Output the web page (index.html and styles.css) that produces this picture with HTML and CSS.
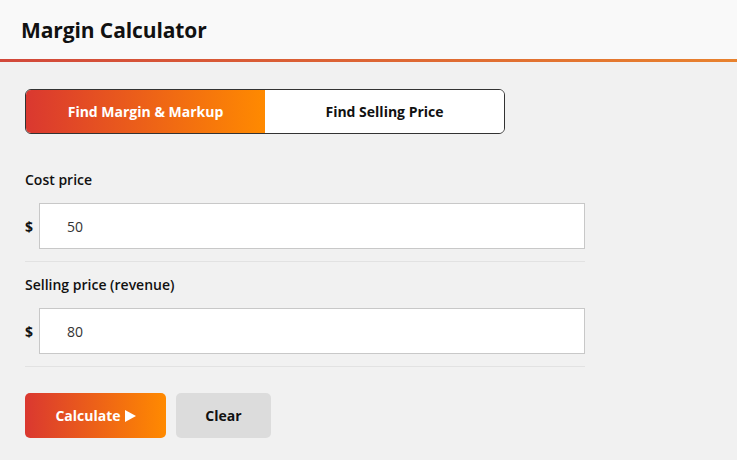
FILE: index.html
```html
<!DOCTYPE html>
<html>

<head>
  <title>Margin Calculator</title>
  <link rel="stylesheet" href="styles.css">
</head>

<body>
  <header class="top-bar">
    <h1>Margin Calculator</h1>
  </header>

  <main class="calc">
    <!-- Mode switch -->
    <div class="mode-toggle">
      <button class="mode active">Find Margin &amp; Markup</button>
      <button class="mode">Find Selling Price</button>
    </div>

    <div class="field">
      <label for="cost">Cost price</label>
      <div class="input-row">
        <span class="currency">$</span>
        <input type="text" id="cost" value="50" />
      </div>
    </div>

    <div class="field">
      <label for="revenue">Selling price (revenue)</label>
      <div class="input-row">
        <span class="currency">$</span>
        <input type="text" id="revenue" value="80" />
      </div>
    </div>

    <div class="actions">
      <button class="btn-calc">Calculate
        <svg width="11" height="12" viewBox="0 0 11 12"><path d="M0 0 L11 6 L0 12 Z" fill="#fff" /></svg>
      </button>
      <button class="btn-clear">Clear</button>
    </div>
  </main>
</body>

</html>
```

FILE: styles.css
```css
body {
  margin: 0;
  background-color: #f1f1f1;
  font-family: "Open Sans", "Noto Sans", sans-serif;
  color: #111;
}

/* Header with gradient underline */
.top-bar {
  height: 62px;
  background-color: #f9f9f9;
  border-bottom: 3px solid;
  border-image: linear-gradient(to right, #d2483a, #e8822e) 1;
  display: flex;
  align-items: center;
  padding-left: 21px;
  box-sizing: border-box;
}

.top-bar h1 {
  margin: 0;
  font-size: 21px;
  font-weight: 700;
  letter-spacing: -0.1px;
}

.calc {
  padding: 27px 25px;
}

/* Toggle between the two calculator modes */
.mode-toggle {
  display: flex;
  width: 480px;
  height: 45px;
  border: 1px solid #333;
  border-radius: 6px;
  overflow: hidden;
  box-sizing: border-box;
  margin-bottom: 36px;
}

.mode {
  flex: 1;
  border: none;
  background: #fff;
  font-family: inherit;
  font-size: 14px;
  font-weight: 700;
  color: #111;
}

.mode.active {
  background: linear-gradient(to right, #da3830, #ff8a00);
  color: #fff;
}

.field {
  width: 560px;
  padding-bottom: 12px;
  border-bottom: 1px solid #e2e2e2;
  margin-bottom: 13px;
}

.field label {
  display: block;
  font-size: 14px;
  font-weight: 600;
  line-height: 20px;
  margin-bottom: 13px;
}

.input-row {
  display: flex;
  align-items: center;
  gap: 6px;
}

.currency {
  width: 8px;
  font-size: 14px;
  font-weight: 700;
}

.input-row input {
  flex: 1;
  height: 46px;
  box-sizing: border-box;
  border: 1px solid #c8c8c8;
  background: #fff;
  padding: 0 27px;
  font-family: inherit;
  font-size: 14px;
  color: #333;
}

.actions {
  display: flex;
  gap: 10px;
  margin-top: 26px;
}

.btn-calc,
.btn-clear {
  height: 45px;
  border: none;
  border-radius: 5px;
  font-family: inherit;
  font-size: 14px;
  font-weight: 700;
}

.btn-calc {
  width: 141px;
  background: linear-gradient(to right, #da3830, #ff8a00);
  color: #fff;
  display: flex;
  align-items: center;
  justify-content: center;
  gap: 4px;
}

.btn-clear {
  width: 95px;
  background: #dcdcdc;
  color: #111;
}
```
